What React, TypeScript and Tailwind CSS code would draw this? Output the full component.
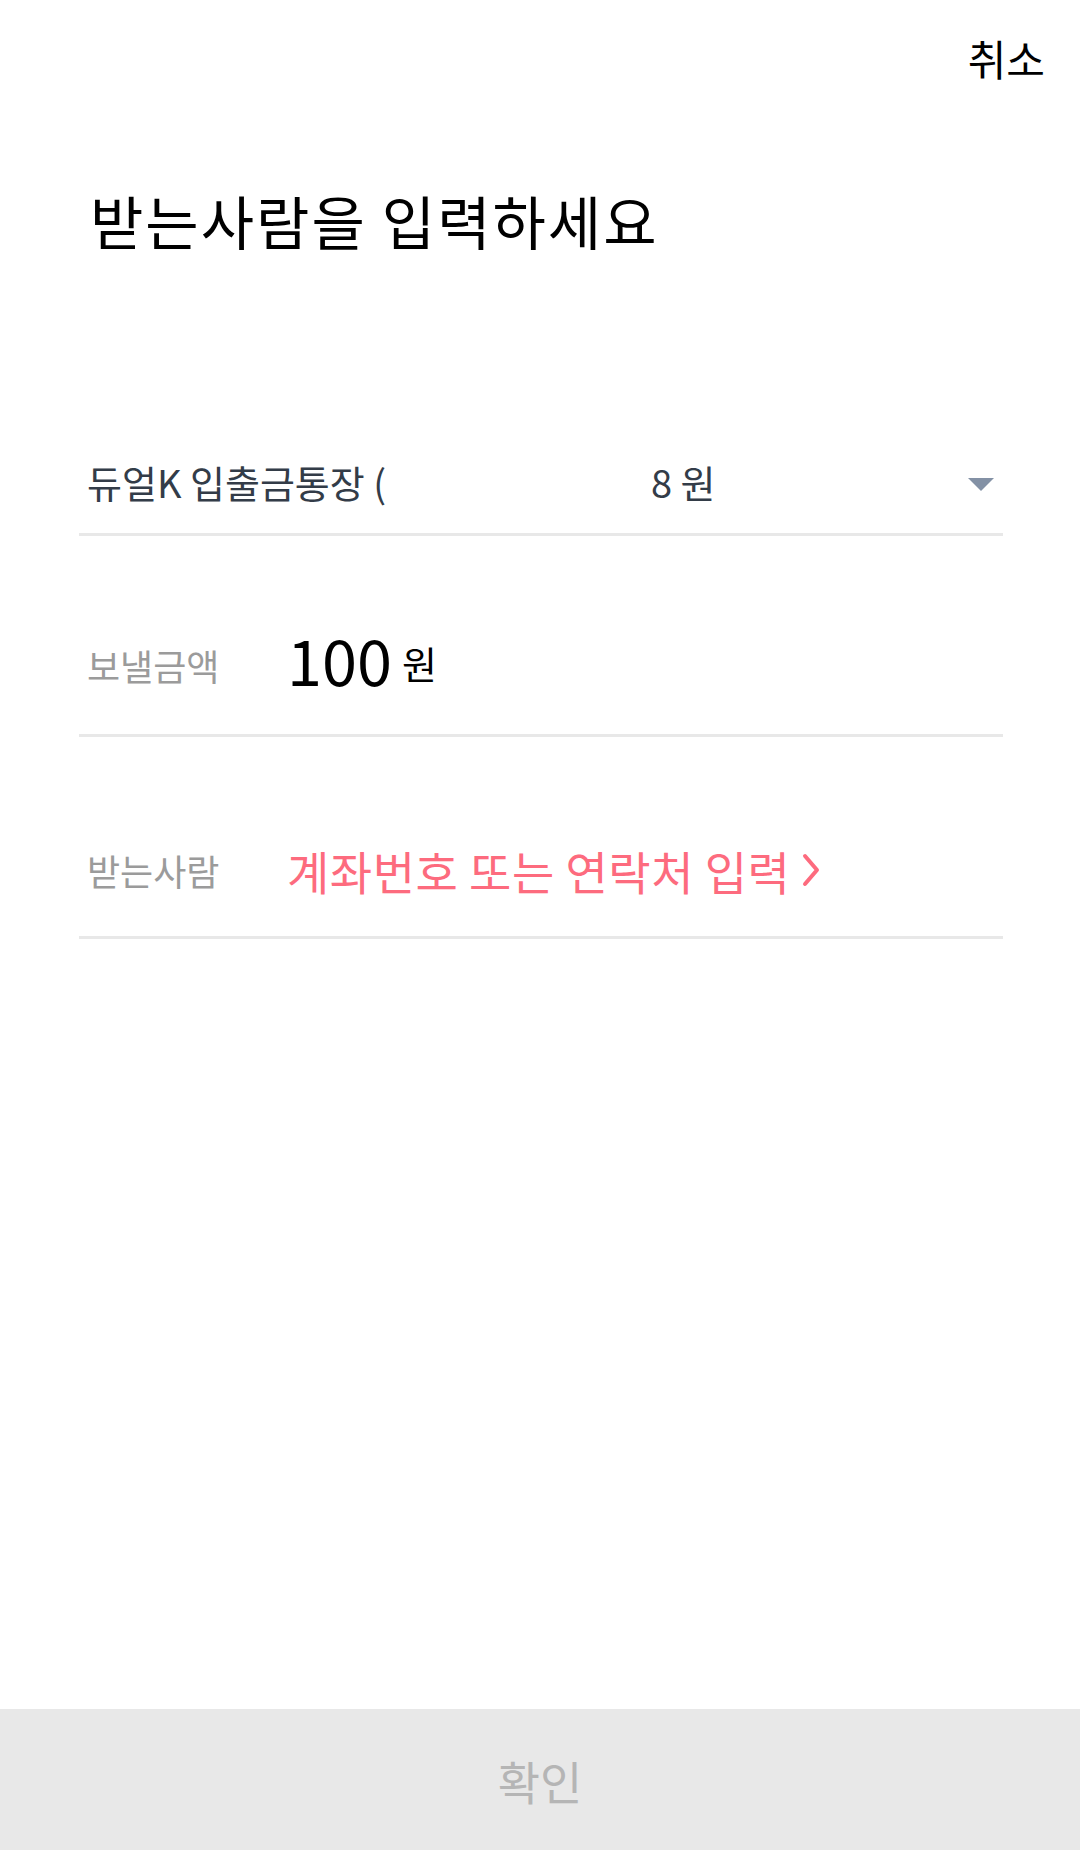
import React from 'react';

const rowLine = 'border-b-[3px] border-[#e8e8e8]';

function Chevron() {
  return (
    <svg width="18" height="34" viewBox="0 0 18 34" className="ml-[12px]">
      <path d="M3 3 L15 17 L3 31" fill="none" stroke="#fd6b7e" strokeWidth="4" strokeLinecap="round" strokeLinejoin="round" />
    </svg>
  );
}

export default function App() {
  return (
    <div
      className="min-h-[1850px] flex flex-col bg-white text-black"
      style={{ fontFamily: '"Noto Sans CJK KR", "Noto Sans", sans-serif' }}
    >
      <div className="h-[116px] flex items-center justify-end pr-[35px]">
        <button className="text-[42px] leading-none text-black">취소</button>
      </div>

      <h1 className="mt-[75px] pl-[90px] text-[58px] leading-none tracking-[2px] font-normal text-black">
        받는사람을 입력하세요
      </h1>

      <div className="mt-[181px] ml-[79px] mr-[77px]">
        {/* 출금 계좌 */}
        <div className={`h-[106px] flex items-center pl-[8px] pr-[9px] ${rowLine}`}>
          <span className="w-[564px] text-[38px] leading-none text-[#333c48] whitespace-nowrap">듀얼K 입출금통장 (</span>
          <span className="text-[38px] leading-none text-[#333c48]">8 원</span>
          <svg width="26" height="14" viewBox="0 0 26 14" className="ml-auto mt-[6px]">
            <polygon points="0,0 26,0 13,13" fill="#8391a5" />
          </svg>
        </div>

        {/* 보낼금액 */}
        <div className={`mt-[60px] h-[141px] flex items-center pl-[8px] ${rowLine}`}>
          <span className="w-[200px] text-[36px] leading-none text-[#9b9b9b]">보낼금액</span>
          <span className="mb-[14px] text-[63px] leading-none text-black">100</span>
          <span className="ml-[10px] mb-[4px] text-[38px] leading-none text-black">원</span>
        </div>

        {/* 받는사람 */}
        <div className={`mt-[67px] h-[135px] flex items-center pl-[8px] ${rowLine}`}>
          <span className="w-[200px] text-[36px] leading-none text-[#9b9b9b]">받는사람</span>
          <span className="text-[46px] leading-none tracking-[0.5px] text-[#fd6b7e]">계좌번호 또는 연락처 입력</span>
          <Chevron />
        </div>
      </div>

      <div className="flex-1" />

      <button className="h-[141px] w-full bg-[#e8e8e8] flex items-center justify-center text-[46px] leading-none text-[#b5b5b5]">
        확인
      </button>
    </div>
  );
}
